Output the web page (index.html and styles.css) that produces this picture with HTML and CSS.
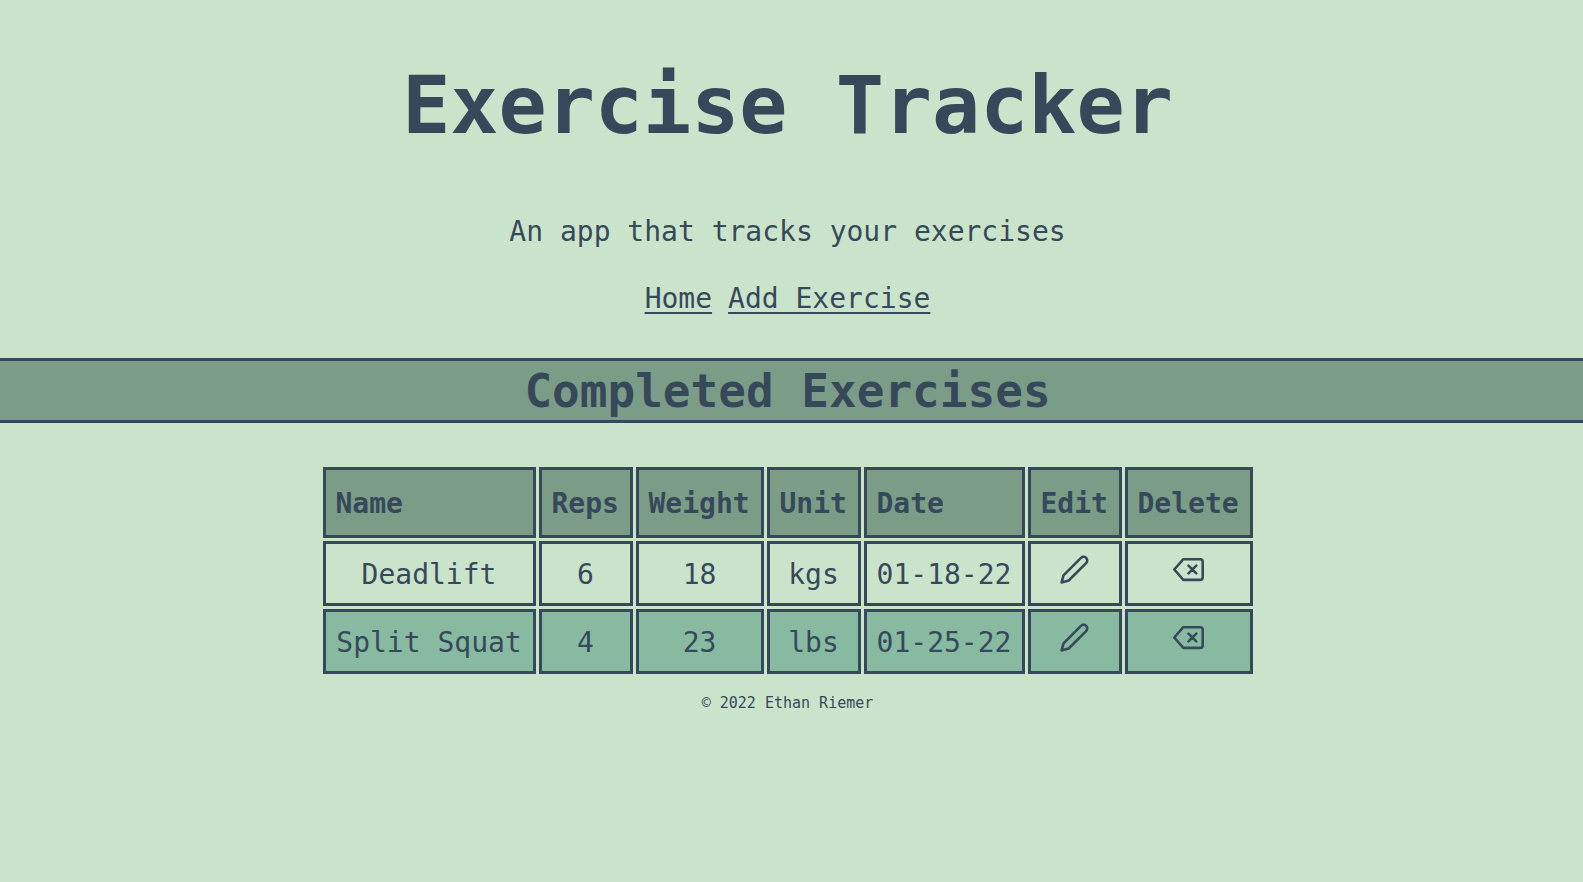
FILE: index.html
```html
<!DOCTYPE html>
<html lang="en">
<head>
<meta charset="utf-8">
<title>Exercise Tracker</title>
<link rel="stylesheet" href="styles.css">
</head>
<body>
<svg class="symbols" aria-hidden="true">
  <symbol id="pencil" viewBox="0 0 24 24"><path d="M17 3a2.828 2.828 0 1 1 4 4L7.5 20.5 2 22l1.5-5.5L17 3z"/></symbol>
  <symbol id="backspace" viewBox="0 0 24 24"><path d="M21 4H8l-7 8 7 8h13a2 2 0 0 0 2-2V6a2 2 0 0 0-2-2zM18 9l-6 6M12 9l6 6"/></symbol>
</svg>
<header class="intro">
  <h1 class="title">Exercise Tracker</h1>
  <p class="tagline">An app that tracks your exercises</p>
  <nav class="nav">
    <a class="nav-link" href="#">Home</a>
    <a class="nav-link" href="#">Add Exercise</a>
  </nav>
</header>
<main>
  <h2 class="section-title">Completed Exercises</h2>
  <table class="exercises">
    <colgroup>
      <col class="col-name"><col class="col-short"><col class="col-medium"><col class="col-short"><col class="col-date"><col class="col-short"><col class="col-medium">
    </colgroup>
    <thead>
      <tr><th>Name</th><th>Reps</th><th>Weight</th><th>Unit</th><th>Date</th><th>Edit</th><th>Delete</th></tr>
    </thead>
    <tbody>
      <tr>
        <td>Deadlift</td><td>6</td><td>18</td><td>kgs</td><td>01-18-22</td>
        <td class="action"><button class="icon-button" type="button" aria-label="Edit Deadlift"><svg class="icon"><use href="#pencil"/></svg></button></td>
        <td class="action"><button class="icon-button" type="button" aria-label="Delete Deadlift"><svg class="icon"><use href="#backspace"/></svg></button></td>
      </tr>
      <tr>
        <td>Split Squat</td><td>4</td><td>23</td><td>lbs</td><td>01-25-22</td>
        <td class="action"><button class="icon-button" type="button" aria-label="Edit Split Squat"><svg class="icon"><use href="#pencil"/></svg></button></td>
        <td class="action"><button class="icon-button" type="button" aria-label="Delete Split Squat"><svg class="icon"><use href="#backspace"/></svg></button></td>
      </tr>
    </tbody>
  </table>
</main>
<footer class="footer">© 2022 Ethan Riemer</footer>
</body>
</html>
```
FILE: styles.css
```css
* {
  box-sizing: border-box;
}

body {
  margin: 0;
  padding-right: 8px;
  background: #cae4cb;
  color: #36495a;
  font-family: Consolas, "DejaVu Sans Mono", monospace;
  font-size: 28px;
  line-height: 39px;
  text-align: center;
}

.symbols {
  display: none;
}

.intro {
  display: flex;
  flex-direction: column;
  gap: 28px;
  padding: 58px 0 40px;
}

.title {
  margin: 0 0 30px;
  font-size: 80px;
  line-height: 96px;
}

.tagline {
  margin: 0;
}

.nav {
  display: flex;
  justify-content: center;
  gap: 16px;
}

.nav-link {
  color: inherit;
  text-decoration: underline 2px;
  text-underline-offset: 4px;
}

.section-title {
  margin: 0 -8px 41px 0;
  padding: 2px 8px 0 0;
  border: solid #36495a;
  border-width: 3px 0;
  background: #7b9d88;
  font-size: 46px;
  line-height: 57px;
}

.exercises {
  margin: 0 auto;
  border-spacing: 3px;
}

.col-name {
  width: 213px;
}

.col-short {
  width: 94px;
}

.col-medium {
  width: 128px;
}

.col-date {
  width: 161px;
}

.exercises th,
.exercises td {
  padding: 11px 10px 9px;
  border: 3px solid #36495a;
}

.exercises th {
  background: #7b9d88;
  line-height: 45px;
  text-align: left;
}

.exercises tbody tr:nth-child(even) td {
  background: #88b9a1;
}

.exercises .action {
  padding: 10px;
  vertical-align: top;
}

.icon-button {
  display: block;
  margin: 0 auto;
  padding: 0;
  border: 0;
  background: none;
  color: inherit;
  cursor: pointer;
}

.icon {
  display: block;
  width: 31px;
  height: 31px;
  fill: none;
  stroke: currentColor;
  stroke-width: 2;
  stroke-linecap: round;
  stroke-linejoin: round;
}

.footer {
  margin-top: 16px;
  font-size: 15px;
  line-height: 20px;
}
```
